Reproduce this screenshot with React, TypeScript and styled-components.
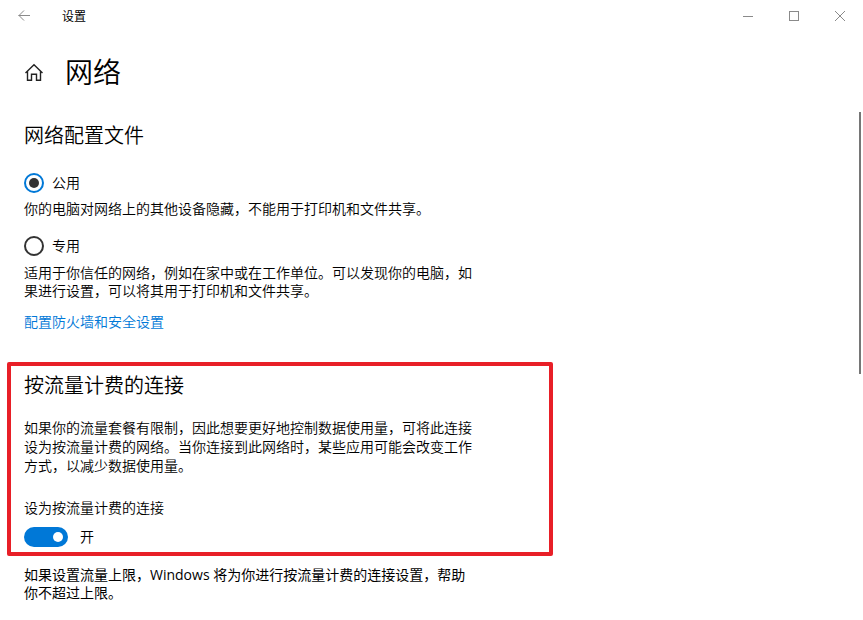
import React, { useState } from "react";
import styled, { createGlobalStyle } from "styled-components";

const GlobalStyle = createGlobalStyle`
  *, *::before, *::after { box-sizing: border-box; }
  body {
    margin: 0;
    background: #fff;
    color: #000;
    font-family: "Open Sans", "Noto Sans CJK SC", sans-serif;
    font-size: 14px;
    font-weight: 350;
    line-height: 18px;
  }
  h1, h2, p { margin: 0; font-weight: 350; }
  fieldset { margin: 0; padding: 0; border: 0; min-width: 0; }
`;

const Window = styled.div`
  min-height: 100vh;
  display: flex;
  flex-direction: column;
`;

const TitleBar = styled.header`
  display: flex;
  align-items: center;
  height: 32px;
`;

const BarButton = styled.button`
  display: flex;
  align-items: center;
  justify-content: center;
  width: ${(p: { $width: number }) => p.$width}px;
  height: 32px;
  padding: 0;
  border: 0;
  background: none;
  color: #8a8a8a;
`;

const WindowTitle = styled.span`
  flex: 1;
  padding: 2px 0 0 14px;
  font-size: 12px;
  font-weight: 400;
`;

const PageHeader = styled.div`
  display: flex;
  align-items: center;
  gap: 21px;
  height: 80px;
  padding-left: 24px;
`;

const HomeButton = styled.button`
  display: flex;
  padding: 0;
  border: 0;
  background: none;
  color: #222;
`;

const PageTitle = styled.h1`
  font-size: 28px;
  line-height: 36px;
`;

const Body = styled.div`
  flex: 1;
  display: grid;
  grid-template-columns: 1fr 2px;
  padding-right: 2px;
`;

const Content = styled.main`
  padding: 12px 8px 16px 7px;
`;

const Section = styled.section`
  padding: 0 17px;
`;

const Highlight = styled.section`
  max-width: 546px;
  margin: 31px 0 10px;
  padding: 8px 13px 5px;
  border: 4px solid #e81f27;
  border-radius: 2px;
`;

const SectionTitle = styled.h2`
  font-size: 20px;
  line-height: 24px;
`;

const Text = styled.p<{ $top?: number; $line?: number }>`
  max-width: 450px;
  margin-top: ${(p) => p.$top ?? 0}px;
  line-height: ${(p) => p.$line ?? 18}px;
`;

const Note = styled(Text)`
  font-weight: 400;
`;

const Option = styled.label<{ $top: number }>`
  display: flex;
  align-items: center;
  gap: 8px;
  width: fit-content;
  height: 20px;
  margin-top: ${(p) => p.$top}px;
`;

const Radio = styled.input`
  appearance: none;
  display: grid;
  place-items: center;
  width: 20px;
  height: 20px;
  margin: 0;
  border: 2px solid #333;
  border-radius: 50%;

  &:checked { border-color: #0078d7; }
  &:checked::before {
    content: "";
    width: 10px;
    height: 10px;
    border-radius: 50%;
    background: #333;
  }
`;

const Link = styled.a`
  display: block;
  width: fit-content;
  margin-top: 13px;
  color: #0078d7;
  text-decoration: none;
`;

const SwitchLabel = styled.label`
  display: block;
  width: fit-content;
  margin-top: 24px;
`;

const SwitchRow = styled.div`
  display: flex;
  align-items: center;
  gap: 12px;
  height: 20px;
  margin-top: 10px;
`;

const Switch = styled.input`
  appearance: none;
  display: flex;
  align-items: center;
  width: 44px;
  height: 20px;
  margin: 0;
  padding: 0 5px;
  border-radius: 10px;
  background: #777;

  &::before {
    content: "";
    width: 10px;
    height: 10px;
    border-radius: 50%;
    background: #fff;
  }
  &:checked {
    justify-content: flex-end;
    background: #0078d7;
  }
`;

const ScrollTrack = styled.div`
  display: grid;
  grid-template-rows: 262fr 246fr;
`;

const ScrollThumb = styled.div`
  background: #767676;
`;

export default function App() {
  const [profile, setProfile] = useState("public");
  const [metered, setMetered] = useState(true);

  return (
    <Window>
      <GlobalStyle />
      <TitleBar>
        <BarButton $width={48} aria-label="返回">
          <svg width="12" height="12" viewBox="0 0 12 12" fill="none" stroke="currentColor">
            <path d="M0.5 5.5H12M6 0.5L1 5.5L6 10.5" />
          </svg>
        </BarButton>
        <WindowTitle>设置</WindowTitle>
        <BarButton $width={46} aria-label="最小化">
          <svg width="10" height="10" viewBox="0 0 10 10" fill="none" stroke="currentColor">
            <path d="M0 5.5H10" />
          </svg>
        </BarButton>
        <BarButton $width={46} aria-label="最大化">
          <svg width="10" height="10" viewBox="0 0 10 10" fill="none" stroke="currentColor">
            <rect x="0.5" y="0.5" width="9" height="9" />
          </svg>
        </BarButton>
        <BarButton $width={46} aria-label="关闭">
          <svg width="10" height="10" viewBox="0 0 10 10" fill="none" stroke="currentColor">
            <path d="M0 0L10 10M10 0L0 10" />
          </svg>
        </BarButton>
      </TitleBar>

      <PageHeader>
        <HomeButton aria-label="主页">
          <svg width="20" height="20" viewBox="0 0 20 20" fill="none" stroke="currentColor" strokeWidth="1.4">
            <path d="M1.5 11L10 2.8L18.5 11M3.5 9.3V18.3H7.5V12.3H12.5V18.3H16.5V9.3" />
          </svg>
        </HomeButton>
        <PageTitle>网络</PageTitle>
      </PageHeader>

      <Body>
        <Content>
          <Section>
            <SectionTitle id="profile-title">网络配置文件</SectionTitle>
            <fieldset aria-labelledby="profile-title">
              <Option $top={25}>
                <Radio type="radio" name="profile" checked={profile === "public"} onChange={() => setProfile("public")} />
                公用
              </Option>
              <Text $top={7}>你的电脑对网络上的其他设备隐藏，不能用于打印机和文件共享。</Text>
              <Option $top={18}>
                <Radio type="radio" name="profile" checked={profile === "private"} onChange={() => setProfile("private")} />
                专用
              </Option>
              <Text $top={8}>
                适用于你信任的网络，例如在家中或在工作单位。可以发现你的电脑，如果进行设置，可以将其用于打印机和文件共享。
              </Text>
            </fieldset>
            <Link href="#firewall">配置防火墙和安全设置</Link>
          </Section>

          <Highlight>
            <SectionTitle>按流量计费的连接</SectionTitle>
            <Text $top={20} $line={19}>
              如果你的流量套餐有限制，因此想要更好地控制数据使用量，可将此连接设为按流量计费的网络。当你连接到此网络时，某些应用可能会改变工作方式，以减少数据使用量。
            </Text>
            <SwitchLabel htmlFor="metered">设为按流量计费的连接</SwitchLabel>
            <SwitchRow>
              <Switch id="metered" type="checkbox" role="switch" checked={metered} onChange={(e) => setMetered(e.target.checked)} />
              <span>{metered ? "开" : "关"}</span>
            </SwitchRow>
          </Highlight>

          <Section>
            <Note>如果设置流量上限，Windows 将为你进行按流量计费的连接设置，帮助你不超过上限。</Note>
          </Section>
        </Content>
        <ScrollTrack aria-hidden="true">
          <ScrollThumb />
        </ScrollTrack>
      </Body>
    </Window>
  );
}
